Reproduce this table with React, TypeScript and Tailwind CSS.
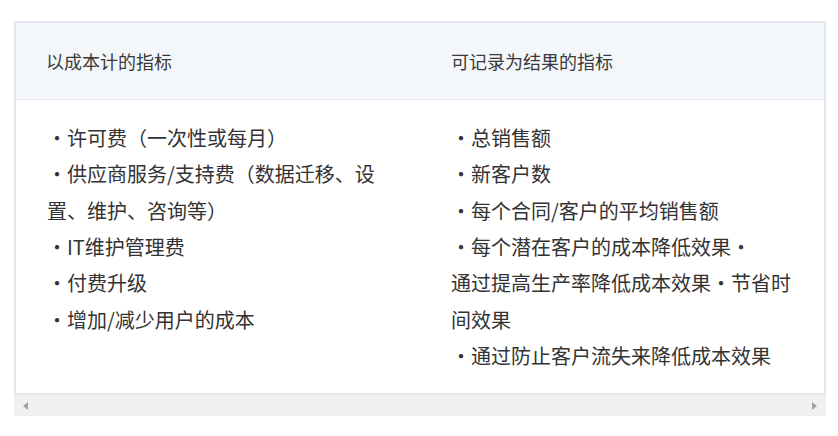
const costItems = [
  "・许可费（一次性或每月）",
  "・供应商服务/支持费（数据迁移、设",
  "置、维护、咨询等）",
  "・IT维护管理费",
  "・付费升级",
  "・增加/减少用户的成本",
];

const resultItems = [
  "・总销售额",
  "・新客户数",
  "・每个合同/客户的平均销售额",
  "・每个潜在客户的成本降低效果・",
  "通过提高生产率降低成本效果・节省时",
  "间效果",
  "・通过防止客户流失来降低成本效果",
];

function Lines({ items }: { items: string[] }) {
  return (
    <div className="pl-[31px] pt-[20px]">
      {items.map((line, i) => (
        <div key={i} className="whitespace-nowrap text-[20px] leading-[36.33px] text-[#333333]">
          {line}
        </div>
      ))}
    </div>
  );
}

export default function App() {
  return (
    <main
      className="w-[838px] h-[436px] bg-white pt-[21px] pl-[14px]"
      style={{ fontFamily: '"Noto Sans CJK SC", "Noto Sans", sans-serif' }}
    >
      <div className="w-[812px]">
        <div className="border-t-2 border-x-2 border-b-2 border-[#e4e8f0]">
          {/* header row */}
          <div className="grid grid-cols-2 h-[77px] bg-[#f4f7fa] border-b border-[#e4e8f0]">
            <div className="flex items-center pl-[30px] text-[18px] text-[#3a3a3a]">以成本计的指标</div>
            <div className="flex items-center pl-[31px] text-[18px] text-[#3a3a3a]">可记录为结果的指标</div>
          </div>
          {/* body row */}
          <div className="grid grid-cols-2 h-[293px] bg-white">
            <Lines items={costItems} />
            <Lines items={resultItems} />
          </div>
        </div>
        {/* horizontal scrollbar */}
        <div className="flex items-center justify-between h-[21px] bg-[#f0f0f0] px-[9px]">
          <svg width="5" height="8" viewBox="0 0 5 8">
            <path d="M5 0 L0 4 L5 8 Z" fill="#a3a3a3" />
          </svg>
          <svg width="5" height="8" viewBox="0 0 5 8">
            <path d="M0 0 L5 4 L0 8 Z" fill="#a3a3a3" />
          </svg>
        </div>
      </div>
    </main>
  );
}
